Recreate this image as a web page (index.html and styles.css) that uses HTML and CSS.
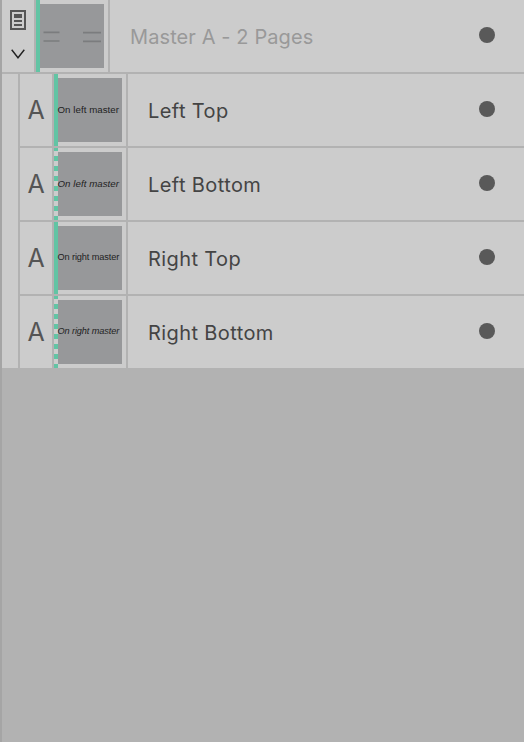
FILE: index.html
```html
<!DOCTYPE html>
<html lang="en">
<head>
  <meta charset="UTF-8" />
  <meta name="viewport" content="width=device-width, initial-scale=1.0" />
  <title>Master Pages</title>
  <link rel="stylesheet" href="styles.css">
</head>
<body>
  <div class="panel">
    <div class="row master">
      <div class="tools">
        <svg width="16" height="20" viewBox="0 0 16 20">
          <path d="M1 1h14v18H1z" fill="none" stroke="#555" stroke-width="2" />
          <path d="M4 4h8v4H4zM4 10h8v2H4zM4 14h8v2H4z" fill="#555" />
        </svg>
        <svg width="14" height="10" viewBox="0 0 14 10">
          <path d="M.7 .7L7 8.800L13.300 .7" fill="none" stroke="#222" stroke-width="1.400" />
        </svg>
      </div>
      <div class="preview">
        <div class="bar"></div>
        <div class="thumb">
          <svg width="64" height="64" viewBox="0 0 64 64">
            <path d="M3.500 28.300h16M3.500 37h16M43 28.700h18M43 37.300h18" stroke="#7b7c7e" stroke-width="1.700" />
          </svg>
        </div>
      </div>
      <div class="label">Master A - 2 Pages</div>
      <div class="dot"></div>
    </div>

    <div class="pages">
      <div class="row">
        <div class="letter">A</div>
        <div class="preview">
          <div class="bar"></div>
          <div class="thumb">On left master</div>
        </div>
        <div class="label">Left Top</div>
        <div class="dot"></div>
      </div>
      <div class="row">
        <div class="letter">A</div>
        <div class="preview">
          <div class="bar dashed"></div>
          <div class="thumb italic">On left master</div>
        </div>
        <div class="label">Left Bottom</div>
        <div class="dot"></div>
      </div>
      <div class="row">
        <div class="letter">A</div>
        <div class="preview">
          <div class="bar"></div>
          <div class="thumb right">On right master</div>
        </div>
        <div class="label">Right Top</div>
        <div class="dot"></div>
      </div>
      <div class="row">
        <div class="letter">A</div>
        <div class="preview">
          <div class="bar dashed"></div>
          <div class="thumb right italic">On right master</div>
        </div>
        <div class="label">Right Bottom</div>
        <div class="dot"></div>
      </div>
    </div>
  </div>
</body>
</html>
```
FILE: styles.css
```css
* {
  box-sizing: border-box;
}
body {
  margin: 0;
  background: #b2b2b2;
  font-family: Inter, sans-serif;
}
.panel {
  min-height: 100vh;
  border-left: 2px solid #a5a5a5;
}
.row {
  display: flex;
  align-items: center;
  height: 74px;
  padding-right: 29px;
  background: #ccc;
  border-bottom: 2px solid #b2b2b2;
}
.pages {
  padding-left: 16px;
  background: #ccc;
}
.pages .row {
  border-left: 2px solid #b2b2b2;
}
.pages .row:last-child {
  height: 72px;
  border-bottom: 0;
}
.tools {
  display: flex;
  flex-direction: column;
  align-items: center;
  gap: 19px;
  width: 32px;
  height: 72px;
  padding-top: 10px;
}
.letter {
  width: 32px;
  padding-bottom: 1px;
  font-size: 25px;
  line-height: 30px;
  text-align: center;
  color: #555;
}
.preview {
  display: flex;
  align-items: center;
  width: 76px;
  height: 72px;
  border-left: 2px solid #b2b2b2;
  border-right: 2px solid #b2b2b2;
}
.bar {
  width: 4px;
  height: 72px;
  background: #62c4a4;
}
.bar.dashed {
  background: repeating-linear-gradient(#62c4a4 0 5px, transparent 5px 10px);
  background-position: 0 -2px;
}
.thumb {
  width: 64px;
  height: 64px;
  background: #97989a;
  font-family: "Liberation Sans", Arial, sans-serif;
  font-size: 9.700px;
  line-height: 63px;
  letter-spacing: 0.050px;
  white-space: nowrap;
  text-indent: -0.500px;
  color: #222;
}
.thumb.right {
  font-size: 9.200px;
  letter-spacing: -0.110px;
}
.thumb.italic {
  font-style: italic;
}
.label {
  flex: 1;
  padding: 2px 0 0 20px;
  font-size: 20px;
  line-height: 24px;
  letter-spacing: 0.400px;
  color: #444;
}
.master .label {
  letter-spacing: 0.100px;
  color: #999;
}
.dot {
  width: 16px;
  height: 16px;
  margin-bottom: 2px;
  border-radius: 50%;
  background: #595959;
}
```
